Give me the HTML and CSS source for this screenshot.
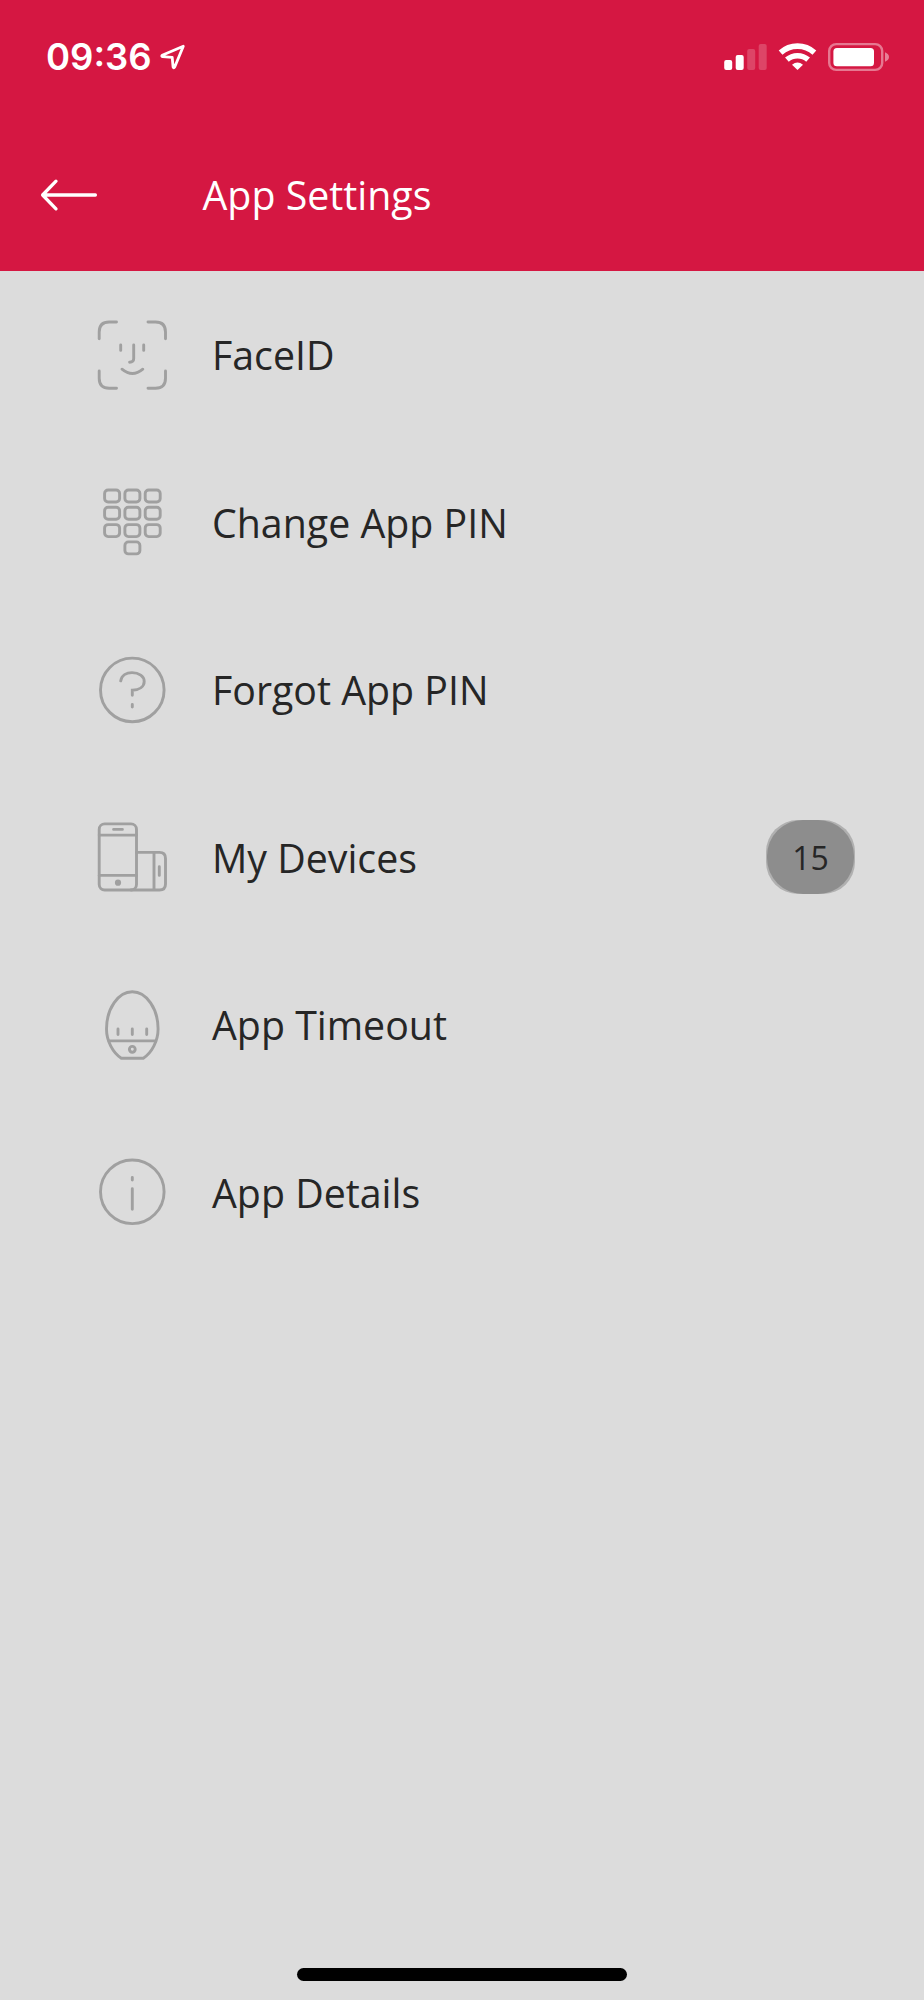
FILE: index.html
```html
<!DOCTYPE html>
<html lang="en">

<head>
  <meta charset="UTF-8" />
  <meta name="viewport" content="width=device-width, initial-scale=1.0" />
  <title>App Settings</title>
  <link rel="stylesheet" href="styles.css">
</head>

<body>
  <header class="header">
    <!-- Status bar -->
    <div class="status-bar">
      <div class="status-left">
        <span class="time">09:36</span>
        <svg class="location" width="26" height="26" viewBox="0 0 26 26">
          <path d="M23.3 2.2L2.2 11.2Q1.2 12.2 2.6 12.6L12.2 13.4L13.1 23Q13.8 24.7 14.6 23.2Z" />
        </svg>
      </div>
      <svg class="status-icons" width="170" height="30" viewBox="0 0 170 30">
        <rect x="2.2" y="18" width="8" height="10" rx="2" />
        <rect x="13.7" y="13" width="8" height="15" rx="2" />
        <rect x="25.2" y="7" width="8" height="21" rx="2" opacity="0.2" />
        <rect x="36.7" y="2" width="8" height="26" rx="2" opacity="0.2" />
        <g class="wifi">
          <path d="M58.6 10.6A25.2 25.2 0 0 1 92.4 10.6" />
          <path d="M64.9 17.7A16 16 0 0 1 86.1 17.7" />
        </g>
        <path d="M75.5 28L70 22.7Q75.5 18.2 81 22.7Z" />
        <rect class="battery" x="107.2" y="2.1" width="53" height="25.8" rx="7" />
        <rect x="111.4" y="6" width="40.6" height="18.3" rx="3.5" />
        <path d="M163 10.3Q167 12 167 15T163 19.7Z" opacity="0.45" />
      </svg>
    </div>

    <!-- Title bar -->
    <div class="title-bar">
      <a class="back" href="#" title="Back">
        <svg width="60" height="34" viewBox="0 0 60 34">
          <path d="M17 3.2L3.6 17L17 30.8M3.6 17H56.4" />
        </svg>
      </a>
      <h1 class="title">App Settings</h1>
    </div>
  </header>

  <main>
    <ul class="settings-list">
      <li class="settings-item">
        <svg class="icon" viewBox="0 0 72 72">
          <path d="M3.2 19.8V13Q3.2 3 13.2 3H20.5M52 3H59.5Q69.5 3 69.5 13V19.8M69.5 52V59.2Q69.5 69.2 59.5 69.2H52M20.5 69.2H13.2Q3.2 69.2 3.2 59.2V52" />
          <path d="M24.7 26V31.4M47.7 26V31.4M37.7 26V39.5Q37.7 43.2 33.6 43.2M26 50.2Q36.4 58.8 46.8 50.2" />
        </svg>
        <span class="label">FaceID</span>
      </li>
      <li class="settings-item">
        <svg class="icon" viewBox="0 0 72 72">
          <rect x="8.6" y="4" width="15" height="12" rx="3.5" />
          <rect x="28.9" y="4" width="15" height="12" rx="3.5" />
          <rect x="49.2" y="4" width="15" height="12" rx="3.5" />
          <rect x="8.6" y="21.3" width="15" height="12" rx="3.5" />
          <rect x="28.9" y="21.3" width="15" height="12" rx="3.5" />
          <rect x="49.2" y="21.3" width="15" height="12" rx="3.5" />
          <rect x="8.6" y="38.6" width="15" height="12" rx="3.5" />
          <rect x="28.9" y="38.6" width="15" height="12" rx="3.5" />
          <rect x="49.2" y="38.6" width="15" height="12" rx="3.5" />
          <rect x="28.9" y="55.9" width="15" height="12" rx="3.5" />
        </svg>
        <span class="label">Change App PIN</span>
      </li>
      <li class="settings-item">
        <svg class="icon" viewBox="0 0 72 72">
          <circle cx="36.3" cy="35.9" r="31.8" />
          <path d="M24.7 26.9C25.6 21.5 30.5 18.6 36 18.6C43 18.6 48.2 22.3 48.2 27.4C48.2 32.5 43.5 35.9 36.3 36.2V41.3M36.3 50.4V53" />
        </svg>
        <span class="label">Forgot App PIN</span>
      </li>
      <li class="settings-item">
        <svg class="icon" viewBox="0 0 72 72">
          <rect x="3.2" y="2.9" width="37.3" height="66.1" rx="5.5" />
          <path d="M3.2 14.1H40.5M3.2 54.4H40.5M17.6 8.4H26.4" />
          <path d="M40.5 31.4H63.5Q69.5 31.4 69.5 37.4V63Q69.5 69 63.5 69H35M58 31.4V69M63.3 45.8V54.4" />
          <circle class="dot" cx="22" cy="61.7" r="3.1" />
        </svg>
        <span class="label">My Devices</span>
        <span class="badge">15</span>
      </li>
      <li class="settings-item">
        <svg class="icon" viewBox="0 0 72 72">
          <path d="M25.3 69.2C17 64 10.5 52 10.5 40C10.5 20 22 2.8 36.3 2.8S62.1 20 62.1 40C62.1 52 55.6 64 47.3 69.2Z" />
          <path d="M13 51.9H59.6" />
          <path d="M22 39.9V45.6M36.3 39.9V45.6M50.7 39.9V45.6" />
          <circle cx="36.3" cy="60.3" r="2.9" />
        </svg>
        <span class="label">App Timeout</span>
      </li>
      <li class="settings-item">
        <svg class="icon" viewBox="0 0 72 72">
          <circle cx="36.3" cy="35.8" r="31.8" />
          <path d="M36.3 32.8V53.2M36.3 21.4V24.1" />
        </svg>
        <span class="label">App Details</span>
      </li>
    </ul>
  </main>

  <footer class="footer">
    <div class="home-indicator"></div>
  </footer>
</body>

</html>
```

FILE: styles.css
```css
*,
*::after,
*::before {
  margin: 0;
  padding: 0;
  box-sizing: border-box;
}

body {
  display: flex;
  flex-direction: column;
  height: 100vh;
  background-color: #dcdcdc;
  color: #262626;
  font-family: "Open Sans", sans-serif;
  font-size: 39.3px;
  overflow: hidden;
}

.header {
  height: 271px;
  background-color: #d51742;
  color: #fff;
}

.status-bar {
  display: flex;
  align-items: center;
  justify-content: space-between;
  height: 114px;
  padding: 0 32px 0 46px;
}

.status-left {
  display: flex;
  align-items: center;
  gap: 8px;
}

.time {
  width: 106px;
  font-family: Inter, sans-serif;
  font-size: 36.5px;
  font-weight: 600;
  line-height: 44px;
  white-space: nowrap;
}

.location {
  fill: none;
  stroke: #fff;
  stroke-width: 2.8;
  stroke-linejoin: round;
}

.status-icons {
  fill: #fff;
}

.wifi {
  fill: none;
  stroke: #fff;
  stroke-width: 5.6;
}

.battery {
  fill: none;
  stroke: #fff;
  stroke-width: 2.4;
  stroke-opacity: 0.42;
}

.title-bar {
  display: flex;
  align-items: center;
  height: 162px;
  padding-left: 39px;
}

.back {
  display: flex;
  width: 163.5px;
}

.back svg {
  fill: none;
  stroke: #fff;
  stroke-width: 3.3;
  stroke-linecap: round;
  stroke-linejoin: round;
}

.title {
  font-size: inherit;
  font-weight: 400;
}

/* Settings rows */
.settings-list {
  list-style: none;
}

.settings-item {
  display: flex;
  align-items: center;
  height: 167.5px;
  padding: 0 69px 0 96px;
}

.icon {
  flex: none;
  width: 72px;
  height: 72px;
  margin-right: 44px;
  fill: none;
  stroke: #a0a0a0;
  stroke-width: 2.9;
  stroke-linecap: round;
}

.icon .dot {
  fill: #a0a0a0;
  stroke: none;
}

.label {
  padding-top: 1px;
}

/* The fill is rounder than the pill behind it, so a light edge shows at the corners */
.badge {
  display: flex;
  align-items: center;
  justify-content: center;
  position: relative;
  z-index: 0;
  width: 89px;
  height: 74px;
  margin-left: auto;
  border-radius: 32px;
  background-color: #b0b0b0;
  font-size: 32px;
}

.badge::before {
  content: "";
  position: absolute;
  inset: 0 1px;
  z-index: -1;
  border-radius: 36px;
  background-color: #8d8d8d;
}

.footer {
  display: flex;
  justify-content: center;
  margin-top: auto;
  padding-bottom: 19.5px;
}

.home-indicator {
  width: 330px;
  height: 12.5px;
  border-radius: 7px;
  background-color: #000;
}
```
